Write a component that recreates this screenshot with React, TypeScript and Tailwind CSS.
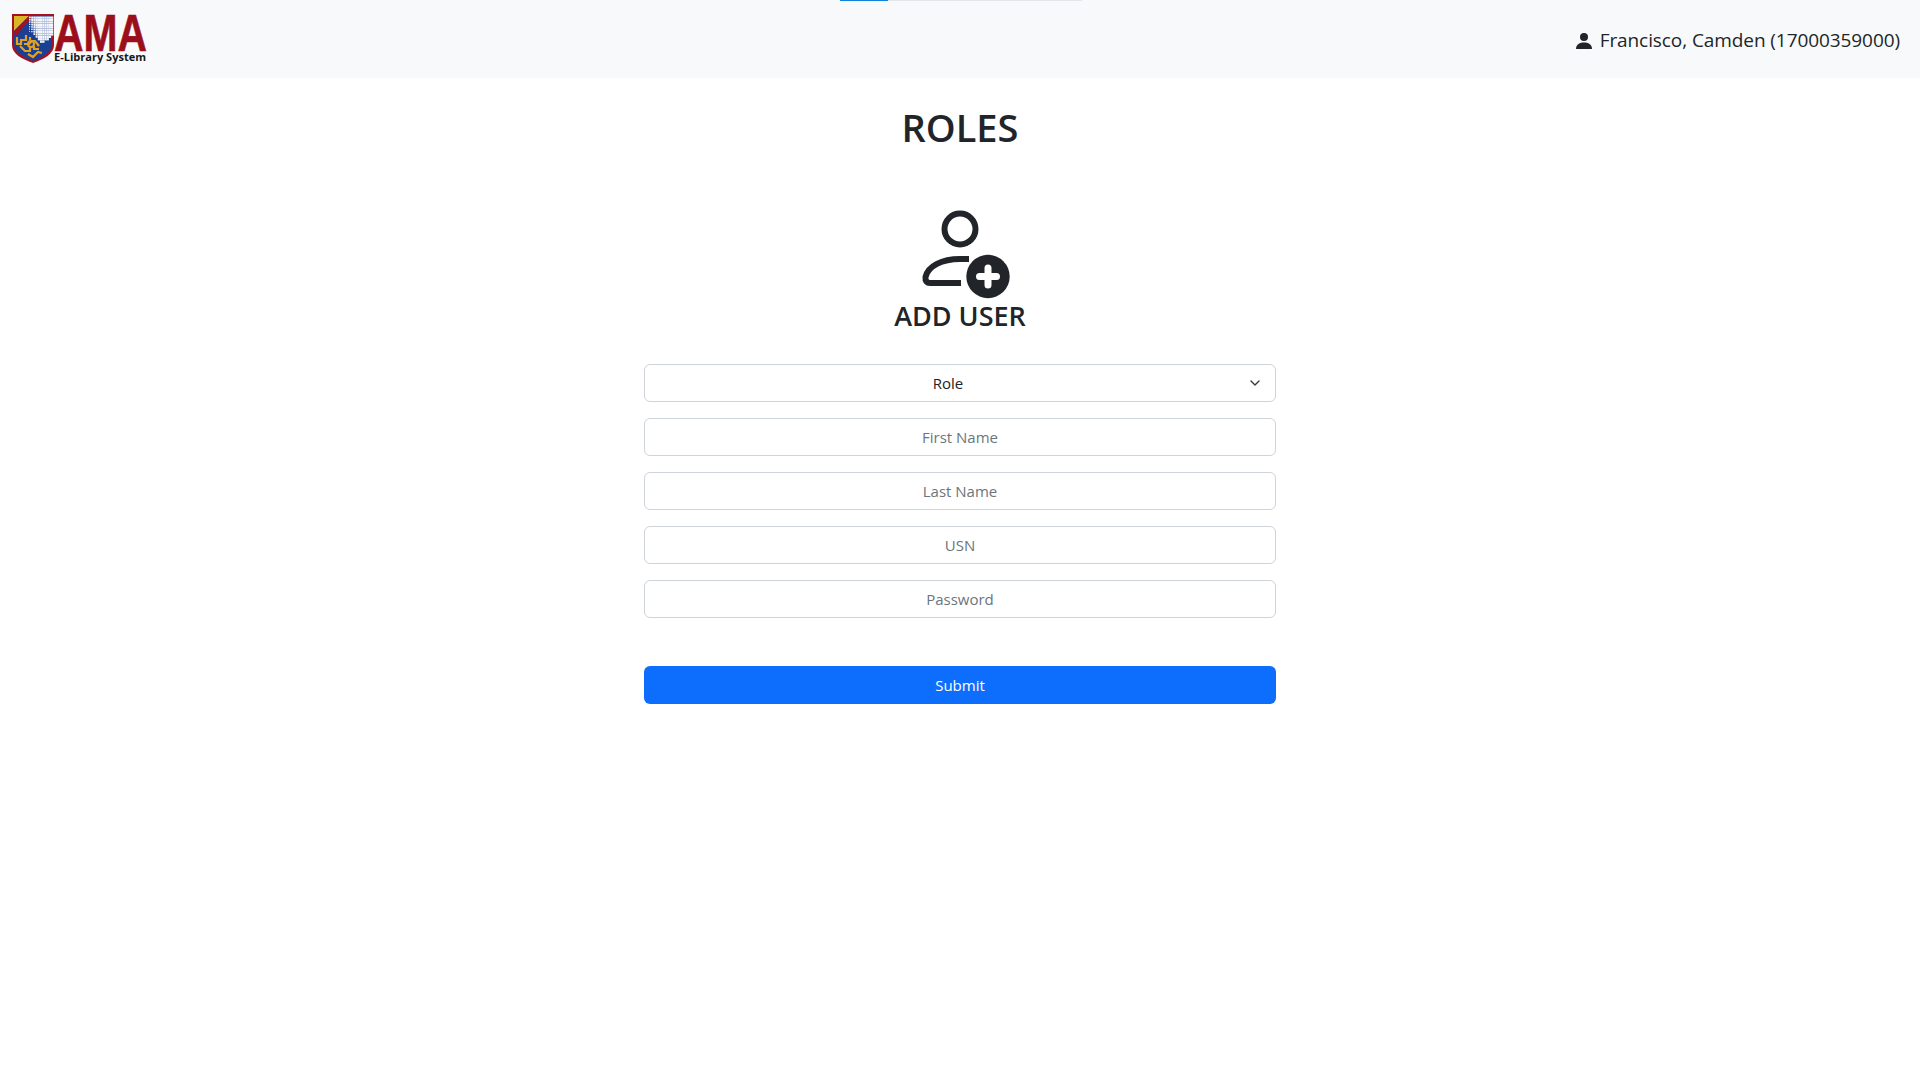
import React from "react";
import { ChevronDown } from "lucide-react";

const fieldClass =
  "block w-full h-[38px] rounded-[6px] border border-[#ced4da] bg-white px-3 text-center text-[15px] text-[#212529] outline-none placeholder:text-[#6c757d]";

// halftone squares on the shield, bigger towards the top right
const dots: { x: number; y: number; s: number }[] = [];
for (let row = 0; row < 12; row++) {
  for (let col = 0; col < 11; col++) {
    const x = 17 + col * 2.2;
    const y = 3.500 + row * 2.4;
    if (y > x + 1 || y > 53 - x * 0.8) continue;
    dots.push({ x, y, s: Math.max(0.9, Math.min(2.3, (x - y * 0.3 - 7) / 5)) });
  }
}

const Logo = () => (
  <svg width="138" height="52" viewBox="0 0 138 52" className="block overflow-visible">
    <path d="M0 1H42V32C42 41 32 46 21 50C10 46 0 41 0 32Z" fill="#a5121f" />
    <path d="M2 3H40V31C40 39 31 44 21 48C11 44 2 39 2 31Z" fill="#1c3f94" />
    <path d="M2 3H17L2 18Z" fill="#d9b528" />
    <path d="M2 18L17 3H21L3 24Z" fill="#a5121f" />
    {dots.map((d) => (
      <rect key={`${d.x}-${d.y}`} x={d.x} y={d.y} width={d.s} height={d.s} fill="#f4f6fb" />
    ))}
    <path
      d="M5 24V31H9V27H14V22M8 33L13 38H18V34M12 31H17L20 28H23L27 33M16 41L21 44L26 39L30 40M18 24V27M22 33V36H27"
      stroke="#e2a21f"
      strokeWidth="2.200"
      fill="none"
    />
    <circle cx="19" cy="31" r="3" fill="none" stroke="#e2a21f" strokeWidth="2" />
    <text
      x="42"
      y="37.500"
      textLength="93"
      lengthAdjust="spacingAndGlyphs"
      fontFamily="'Liberation Sans', sans-serif"
      fontWeight="700"
      fontSize="51"
      fill="#9b0f1a"
      stroke="#9b0f1a"
      strokeWidth="0.600"
    >
      AMA
    </text>
    <text
      x="42"
      y="47.500"
      textLength="92"
      lengthAdjust="spacingAndGlyphs"
      fontFamily="'Open Sans', sans-serif"
      fontWeight="700"
      fontSize="11"
      fill="#15171a"
    >
      E-Library System
    </text>
  </svg>
);

const AddUserIcon = () => (
  <svg width="90" height="91" viewBox="0 0 90 91" className="block" fill="none">
    <circle cx="38" cy="21" r="15.500" stroke="#212529" strokeWidth="6" />
    <path
      d="M47 51H38C20 51 6 58 3.500 69C3 73 5 75 8 75H39"
      stroke="#212529"
      strokeWidth="6"
      strokeLinejoin="round"
    />
    <circle cx="66" cy="68.500" r="21.700" fill="#212529" />
    <path d="M66 60V77M57.500 68.500H74.500" stroke="#fff" strokeWidth="7" strokeLinecap="round" />
  </svg>
);

export default function App() {
  return (
    <div className="min-h-screen bg-white text-[#212529] font-['Open_Sans',sans-serif]">
      <nav className="relative flex h-[78px] items-center justify-between bg-[#f8f9fa] pl-3 pr-5">
        <div className="absolute left-[840px] top-0 h-px w-[242px] bg-[#e3e6ea]">
          <div className="h-px w-[48px] bg-[#0d83dd]" />
        </div>
        <Logo />
        <div className="flex items-center gap-[8px] text-[19px] leading-[30px] tracking-[-0.08px]">
          <svg width="16" height="16" viewBox="0 0 16 16" fill="#212529" className="mt-[3px]">
            <circle cx="8" cy="4" r="4" />
            <path d="M0 16C0 11 4 9.500 8 9.500S16 11 16 16Z" />
          </svg>
          <span className="mt-[2px]">Francisco, Camden (17000359000)</span>
        </div>
      </nav>

      <main className="flex flex-col items-center">
        <h1 className="mt-[25px] text-[38px] font-semibold leading-[48px]">ROLES</h1>
        <div className="mt-[57px] ml-[13px]">
          <AddUserIcon />
        </div>
        <h3 className="text-[27px] font-semibold leading-[34px]">ADD USER</h3>

        <form className="mt-[31px] flex w-[632px] flex-col gap-4">
          <div className="relative">
            <select className={`${fieldClass} appearance-none pr-9`} defaultValue="">
              <option value="">Role</option>
            </select>
            <ChevronDown
              size={16}
              strokeWidth={2}
              className="pointer-events-none absolute right-[13px] top-[11px] text-[#343a40]"
            />
          </div>
          <input className={fieldClass} placeholder="First Name" />
          <input className={fieldClass} placeholder="Last Name" />
          <input className={fieldClass} placeholder="USN" />
          <input className={fieldClass} placeholder="Password" />
          <button
            type="button"
            className="mt-[32px] h-[38px] w-full rounded-[6px] bg-[#0d6efd] text-[15px] text-white"
          >
            Submit
          </button>
        </form>
      </main>
    </div>
  );
}
